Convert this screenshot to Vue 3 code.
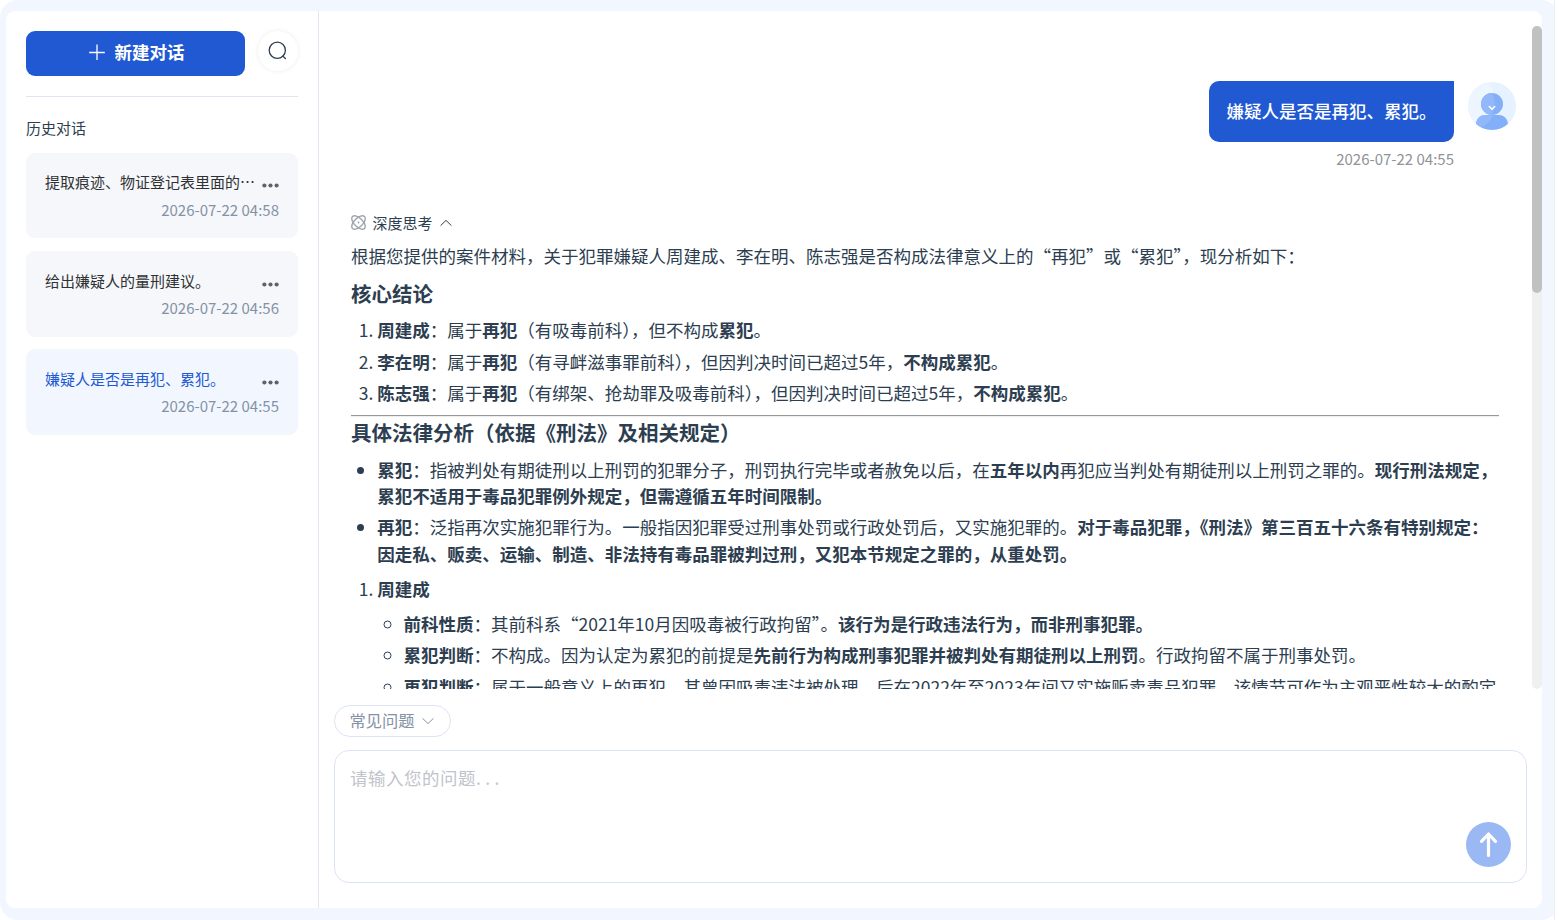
<script setup>
const chats = [
  { title: '提取痕迹、物证登记表里面的⋯', time: '2026-07-22 04:58' },
  { title: '给出嫌疑人的量刑建议。', time: '2026-07-22 04:56' },
  { title: '嫌疑人是否是再犯、累犯。', time: '2026-07-22 04:55', active: true },
]
</script>

<template>
  <div class="viewport">
  <div class="shell">
    <div class="panel">
      <aside class="sidebar">
        <div class="actions">
          <button class="new-chat">
            <svg width="18" height="18" viewBox="0 1 18 18" fill="none" stroke="#fff" stroke-width="1.3">
              <path d="M9 1.5v15.6M1.2 9.5h15.6" />
            </svg>
            <span>新建对话</span>
          </button>
          <button class="search">
            <svg width="20" height="20" viewBox="0 0 20 20" fill="none" stroke="#2c3e50" stroke-width="1.3" stroke-linecap="round">
              <circle cx="9.3" cy="9.3" r="8.1" />
              <path d="M14.9 15.1l2.5 2.4" />
            </svg>
          </button>
        </div>
        <div class="history-title">历史对话</div>
        <div v-for="c in chats" :key="c.time" class="chat" :class="{ active: c.active }">
          <div class="chat-row">
            <span class="chat-name">{{ c.title }}</span>
            <svg class="more" width="17" height="5" viewBox="0 0 17 5" fill="#606266">
              <circle cx="2.4" cy="2.5" r="2.1" /><circle cx="8.5" cy="2.5" r="2.1" /><circle cx="14.6" cy="2.5" r="2.1" />
            </svg>
          </div>
          <div class="chat-time">{{ c.time }}</div>
        </div>
      </aside>

      <main class="main">
        <div class="scroll">
          <div class="messages">
            <div class="question">
              <div class="question-body">
                <div class="bubble">嫌疑人是否是再犯、累犯。</div>
                <div class="time">2026-07-22 04:55</div>
              </div>
              <svg class="avatar" width="48" height="48" viewBox="0 0 48 48">
                <defs><clipPath id="disc"><circle cx="24" cy="24" r="24" /></clipPath></defs>
                <g clip-path="url(#disc)">
                  <rect width="48" height="48" fill="#e6f2ff" />
                  <path d="M0 0h22c6 12 2 26-8 38L0 46z" fill="#edf6ff" />
                  <path d="M8 43c0-6 4-10 9-10h14c5 0 9 4 9 10l-6 5H14z" fill="#83aff8" />
                  <path d="M8 43c0-6 4-10 9-10h8c-2 5-6 9-11 12z" fill="#92b8f9" />
                  <circle cx="24" cy="22" r="11" fill="#83aff8" />
                  <path d="M24 11a11 11 0 0 0-5 20.800c1.500.8 3.500 1.200 5 1.200 3-6 3.500-15 0-22z" fill="#92b8f9" />
                  <path d="M21.300 24.500l2.700 2.700 2.700-2.700" fill="none" stroke="#fff" stroke-width="1.600" stroke-linecap="round" stroke-linejoin="round" />
                </g>
              </svg>
            </div>

            <div class="think">
              <svg class="atom" width="15" height="15" viewBox="0 0 16 16" fill="none" stroke="#a0a5ae" stroke-width="1.500">
                <ellipse cx="8" cy="8" rx="9" ry="4.600" transform="rotate(45 8 8)" />
                <ellipse cx="8" cy="8" rx="9" ry="4.600" transform="rotate(-45 8 8)" />
                <circle cx="8" cy="8" r="1" fill="#a0a5ae" stroke="none" />
              </svg>
              <span>深度思考</span>
              <svg class="caret" width="12" height="8" viewBox="0 0 12 8" fill="none" stroke="#2c3e50" stroke-width="1">
                <path d="M.6 6.600L6 1.400l5.400 5.200" />
              </svg>
            </div>

            <div class="answer">
              <p>根据您提供的案件材料，关于犯罪嫌疑人周建成、李在明、陈志强是否构成法律意义上的“再犯”或“累犯”，现分析如下：</p>
              <h3>核心结论</h3>
              <ol>
                <li><strong>周建成</strong>：属于<strong>再犯</strong>（有吸毒前科），但不构成<strong>累犯</strong>。</li>
                <li><strong>李在明</strong>：属于<strong>再犯</strong>（有寻衅滋事罪前科），但因判决时间已超过5年，<strong>不构成累犯</strong>。</li>
                <li><strong>陈志强</strong>：属于<strong>再犯</strong>（有绑架、抢劫罪及吸毒前科），但因判决时间已超过5年，<strong>不构成累犯</strong>。</li>
              </ol>
              <hr>
              <h3 class="second">具体法律分析（依据《刑法》及相关规定）</h3>
              <ul>
                <li><strong>累犯</strong>：指被判处有期徒刑以上刑罚的犯罪分子，刑罚执行完毕或者赦免以后，在<strong>五年以内</strong>再犯应当判处有期徒刑以上刑罚之罪的。<strong>现行刑法规定，累犯不适用于毒品犯罪例外规定，但需遵循五年时间限制。</strong></li>
                <li><strong>再犯</strong>：泛指再次实施犯罪行为。一般指因犯罪受过刑事处罚或行政处罚后，又实施犯罪的。<strong>对于毒品犯罪，《刑法》第三百五十六条有特别规定：因走私、贩卖、运输、制造、非法持有毒品罪被判过刑，又犯本节规定之罪的，从重处罚。</strong></li>
              </ul>
              <ol class="people">
                <li><strong>周建成</strong>
                  <ul>
                    <li><strong>前科性质</strong>：其前科系“2021年10月因吸毒被行政拘留”。<strong>该行为是行政违法行为，而非刑事犯罪。</strong></li>
                    <li><strong>累犯判断</strong>：不构成。因为认定为累犯的前提是<strong>先前行为构成刑事犯罪并被判处有期徒刑以上刑罚</strong>。行政拘留不属于刑事处罚。</li>
                    <li><strong>再犯判断</strong>：属于一般意义上的再犯。其曾因吸毒违法被处理，后在2022年至2023年间又实施贩卖毒品犯罪，该情节可作为主观恶性较大的酌定</li>
                  </ul>
                </li>
              </ol>
            </div>
          </div>
          <div class="track"><div class="thumb"></div></div>
        </div>

        <div class="composer">
          <button class="faq">
            <span>常见问题</span>
            <svg width="12" height="8" viewBox="0 0 12 8" fill="none" stroke="#8492a6" stroke-width="1">
              <path d="M.6 1.400L6 6.600l5.400-5.200" />
            </svg>
          </button>
          <div class="input">
            <div class="editor" contenteditable="true">请输入您的问题<span class="dots">...</span></div>
            <button class="send">
              <svg width="45" height="45" viewBox="0 0 45 45" fill="none" stroke="#fff" stroke-width="3.200" stroke-linecap="round" stroke-linejoin="round">
                <path d="M22.500 33.500V12M15.500 19.300l7-7.300 7 7.300" />
              </svg>
            </button>
          </div>
        </div>
      </main>
    </div>
  </div>
  </div>
</template>

<style>
body {
  background: #fff;
  overflow: hidden;
}
</style>

<style scoped>
* {
  box-sizing: border-box;
}
.viewport {
  width: 1555px;
  height: 920px;
  overflow: hidden;
  border-right: 1px solid #eceff4;
}
.shell {
  width: 1559px;
  height: 920px;
  padding: 11px 17px 12px 6px;
  background: #f2f7ff;
  border-radius: 18px;
  font-family: "Noto Sans CJK SC", sans-serif;
  font-size: 17.5px;
  line-height: 1.5;
  color: #2c3e50;
}
.panel {
  display: flex;
  height: 897px;
  background: #fff;
  border-radius: 9px;
}
button {
  border: 0;
  padding: 0;
  font: inherit;
  display: flex;
  align-items: center;
  justify-content: center;
}
.sidebar {
  width: 313px;
  flex: none;
  padding: 20px 20px 0;
  border-right: 1px solid #e4e7f0;
}
.actions {
  display: flex;
  justify-content: space-between;
  height: 66px;
  border-bottom: 1px solid #e1e5f2;
}
.new-chat {
  width: 219px;
  height: 45px;
  padding: 0 0 2px 1px;
  gap: 9px;
  border-radius: 9px;
  background: #2159d2;
  color: #fff;
  font-weight: 700;
}
.search {
  width: 40px;
  height: 40px;
  border-radius: 50%;
  background: #fff;
  box-shadow: 0 0 5px rgba(0, 0, 0, 0.08);
}
.history-title {
  margin: 19px 0 13.75px;
  font-size: 15px;
  line-height: 23px;
}
.chat {
  height: 85.500px;
  margin-bottom: 12.750px;
  padding: 16.750px 19px 0;
  border-radius: 9px;
  background: #f5f7fb;
  font-size: 15px;
}
.chat.active {
  background: #f2f7ff;
}
.chat-row {
  display: flex;
  justify-content: space-between;
  align-items: center;
  height: 26px;
  color: #303133;
}
.chat-name {
  white-space: nowrap;
}
.active .chat-name {
  color: #2159d2;
}
.more {
  flex: none;
  margin-top: 6.500px;
}
.chat-time {
  text-align: right;
  line-height: 28px;
  color: #8492a6;
}
.main {
  flex: 1;
  min-width: 0;
}
.scroll {
  display: flex;
  justify-content: space-between;
  height: 678px;
  padding-top: 15px;
}
.messages {
  width: 1197px;
  padding: 55px 0 0 32px;
  overflow: hidden;
}
.track {
  width: 10px;
  border-radius: 5px;
  background: #f0f0f0;
}
.thumb {
  height: 267px;
  border-radius: 5px;
  background: #c1c1c1;
}
.question {
  display: flex;
  justify-content: flex-end;
  gap: 14px;
  height: 130px;
}
.avatar {
  margin-top: 1px;
}
.bubble {
  height: 61px;
  padding: 0 17.500px;
  border-radius: 10px 0 10px 10px;
  background: #2159d2;
  color: #fff;
  font-weight: 500;
  line-height: 60px;
}
.time {
  text-align: right;
  font-size: 15px;
  line-height: 34px;
  color: #909399;
}
.think {
  display: flex;
  align-items: center;
  height: 24px;
  gap: 6.500px;
  font-size: 15px;
}
.atom {
  margin-bottom: 2px;
}
.caret {
  margin-left: 1px;
}
.answer {
  width: 1148px;
  margin-top: 8px;
}
.answer p {
  margin: 0;
}
.answer h3 {
  margin: 9px 0 8px;
  font-size: 20.500px;
  line-height: 31px;
}
.answer ol,
.answer ul {
  margin: 0;
  padding-left: 26.250px;
}
.answer li {
  margin-bottom: 5.250px;
}
.answer hr {
  margin: 8px 0 0;
  border: 0;
  border-top: 1px solid #999;
  border-bottom: 1px solid #eee;
}
.answer h3.second {
  margin: 0 0 9px;
}
.answer ol.people {
  margin-top: 9px;
}
.people ul {
  margin-top: 8.750px;
}
.composer {
  padding: 16px 15px 0;
}
.faq {
  width: 117px;
  height: 32px;
  padding: 0 2px 2px 0;
  gap: 7px;
  border: 1px solid #dde4f3;
  border-radius: 16px;
  background: #fff;
  color: #8492a6;
  font-size: 16.250px;
}
.faq svg {
  margin-top: 2px;
}
.input {
  display: flex;
  align-items: flex-end;
  height: 133px;
  margin-top: 13px;
  padding: 14px 15px 15px;
  border: 1px solid #dae3f5;
  border-radius: 15px;
}
.editor {
  flex: 1;
  align-self: stretch;
  outline: 0;
  line-height: 26px;
  letter-spacing: 0.500px;
  color: #c0c4cc;
}
.dots {
  letter-spacing: 4.350px;
}
.send {
  width: 45px;
  height: 45px;
  border-radius: 50%;
  background: #99b8f4;
}
</style>
